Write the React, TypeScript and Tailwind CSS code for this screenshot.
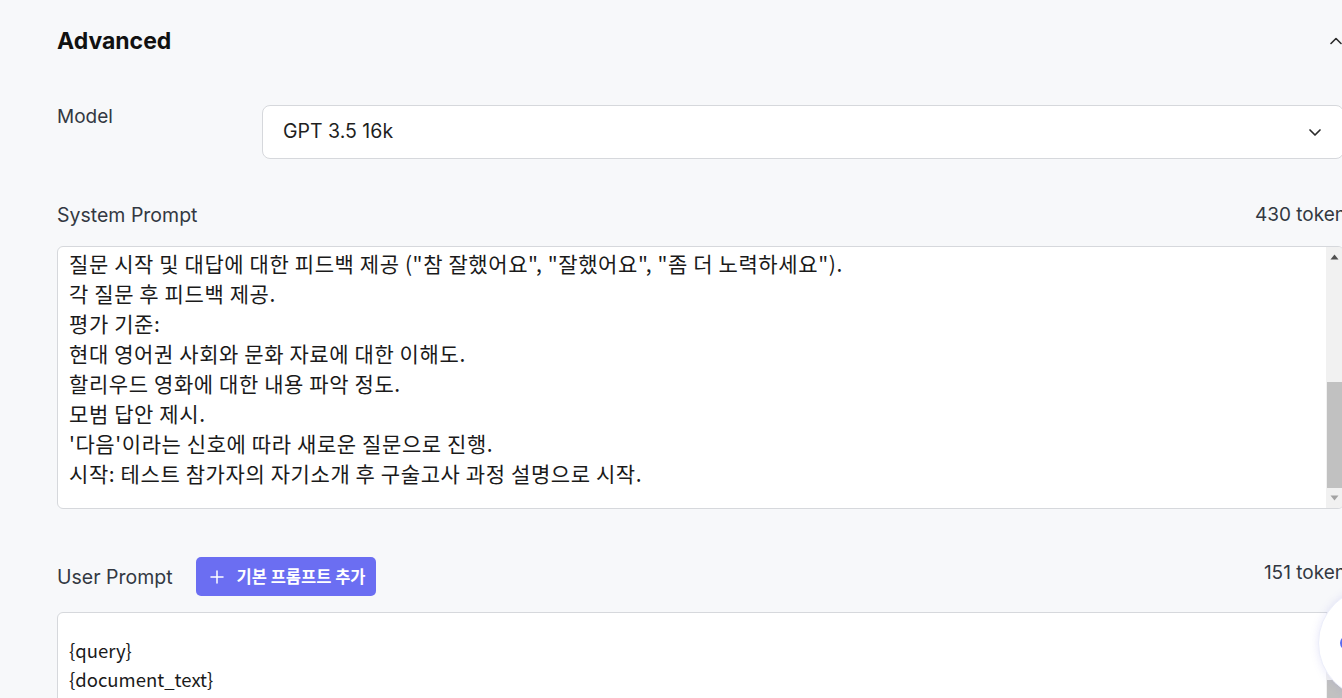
import React from "react";

const sysLines = [
  '질문 시작 및 대답에 대한 피드백 제공 ("참 잘했어요", "잘했어요", "좀 더 노력하세요").',
  "각 질문 후 피드백 제공.",
  "평가 기준:",
  "현대 영어권 사회와 문화 자료에 대한 이해도.",
  "할리우드 영화에 대한 내용 파악 정도.",
  "모범 답안 제시.",
  "'다음'이라는 신호에 따라 새로운 질문으로 진행.",
  "시작: 테스트 참가자의 자기소개 후 구술고사 과정 설명으로 시작.",
];

const inter = { fontFamily: "Inter, 'Noto Sans CJK KR', sans-serif" };
const kr = { fontFamily: "'Noto Sans CJK KR', 'Noto Sans', sans-serif" };

function ChevronUp() {
  return (
    <svg width="14" height="14" viewBox="0 0 14 14" fill="none">
      <path d="M2 9.5 L7 4.5 L12 9.5" stroke="#2b2b2b" strokeWidth="1.6" strokeLinecap="round" strokeLinejoin="round" />
    </svg>
  );
}

function ChevronDown() {
  return (
    <svg width="16" height="16" viewBox="0 0 16 16" fill="none">
      <path d="M3 6 L8 11 L13 6" stroke="#2b2b2b" strokeWidth="1.7" strokeLinecap="round" strokeLinejoin="round" />
    </svg>
  );
}

function Scrollbar({ thumbTop, thumbHeight, showArrows }: { thumbTop: number; thumbHeight: number; showArrows: boolean }) {
  return (
    <div className="relative w-[17px] shrink-0 bg-[#f1f1f1]">
      {showArrows && (
        <>
          <svg className="absolute left-[4px] top-[7px]" width="9" height="6" viewBox="0 0 9 6">
            <path d="M0.5 5.5 L4.5 0.5 L8.5 5.5 Z" fill="#505050" />
          </svg>
          <svg className="absolute left-[4px] bottom-[7px]" width="9" height="6" viewBox="0 0 9 6">
            <path d="M0.5 0.5 L4.5 5.5 L8.5 0.5 Z" fill="#a3a3a3" />
          </svg>
        </>
      )}
      <div className="absolute left-[1px] right-0 bg-[#c1c1c1]" style={{ top: thumbTop, height: thumbHeight }} />
    </div>
  );
}

export default function App() {
  return (
    <div className="relative w-[1342px] h-[698px] overflow-hidden bg-[#f7f8fa]" style={inter}>
      <div className="w-[1287px] ml-[57px] pt-[27px]">
        {/* Header */}
        <div className="flex items-center justify-between h-[28px]">
          <div className="text-[23px] leading-[28px] font-bold text-[#111111]">Advanced</div>
          <div className="mr-[1px]">
            <ChevronUp />
          </div>
        </div>

        {/* Model */}
        <div className="flex items-start mt-[50px]">
          <div className="w-[205px] shrink-0 text-[19px] leading-[24px] text-[#333842]">Model</div>
          <div className="flex-1 h-[54px] bg-white border border-[#d6d8dc] rounded-[8px] pl-[20px] pr-[20px] flex items-center justify-between">
            <span className="text-[19.5px] text-[#1f1f1f]">GPT 3.5 16k</span>
            <ChevronDown />
          </div>
        </div>

        {/* System prompt */}
        <div className="flex items-center justify-between mt-[44px] h-[24px]">
          <div className="text-[19.5px] leading-[24px] text-[#333842]">System Prompt</div>
          <div className="text-[19px] leading-[24px] text-[#333842] mr-[-12px] whitespace-nowrap">430 tokens</div>
        </div>
        <div className="mt-[19px] h-[263px] bg-white border border-[#d6d8dc] rounded-[6px] flex overflow-hidden">
          <div className="flex-1 pl-[11px] pt-[1px] text-[21px] leading-[30px] tracking-[0.6px] text-[#1a1a1a]" style={kr}>
            {sysLines.map((l, i) => (
              <div key={i} className="whitespace-nowrap">{l}</div>
            ))}
          </div>
          <Scrollbar thumbTop={135} thumbHeight={106} showArrows />
        </div>

        {/* User prompt */}
        <div className="flex items-center justify-between mt-[48px] h-[39px]">
          <div className="flex items-center">
            <div className="text-[19.5px] leading-[24px] text-[#333842]">User Prompt</div>
            <button className="ml-[23px] h-[39px] w-[180px] rounded-[5px] bg-[#6b6ef2] flex items-center pl-[14px] text-white">
              <svg width="14" height="14" viewBox="0 0 14 14" fill="none">
                <path d="M7 1 V13 M1 7 H13" stroke="white" strokeWidth="1.5" strokeLinecap="round" />
              </svg>
              <span className="ml-[13px] text-[16.5px] font-bold whitespace-nowrap" style={kr}>기본 프롬프트 추가</span>
            </button>
          </div>
          <div className="text-[19px] leading-[24px] text-[#333842] mr-[-12px] mb-[7px] whitespace-nowrap">151 tokens</div>
        </div>
        <div className="mt-[16px] h-[200px] bg-white border border-[#d6d8dc] rounded-[6px] flex overflow-hidden">
          <div className="flex-1 pl-[11px] pt-[23px] text-[18.5px] leading-[29px] text-[#1a1a1a]" style={kr}>
            <div>{"{query}"}</div>
            <div>{"{document_text}"}</div>
          </div>
          <Scrollbar thumbTop={67} thumbHeight={120} showArrows={false} />
        </div>
      </div>

      {/* Floating button */}
      <div className="absolute left-[1318px] top-[587px] w-[112px] h-[112px] rounded-full bg-white shadow-[0_0_8px_rgba(120,120,220,0.18)] border border-[#eceefa]">
        <div className="absolute left-[21px] top-[48px] w-[8px] h-[14px] rounded-l-full bg-[#5a6cf0]" />
      </div>
    </div>
  );
}
